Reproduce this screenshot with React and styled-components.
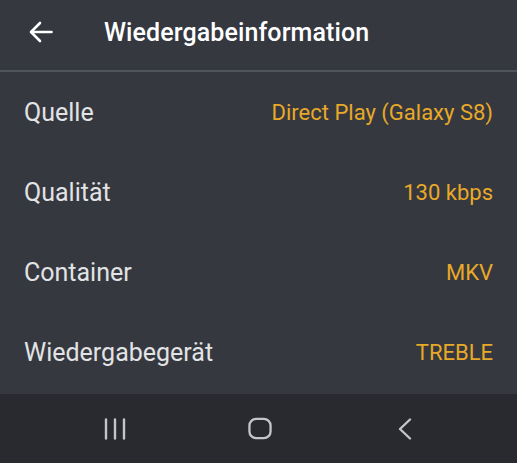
import React from 'react';
import styled, { createGlobalStyle } from 'styled-components';

const GlobalStyle = createGlobalStyle`
  html, body {
    margin: 0;
    padding: 0;
    background: #35383f;
  }
  body {
    font-family: Roboto, "Noto Sans", "Liberation Sans", sans-serif;
    -webkit-font-smoothing: antialiased;
  }
`;

const Screen = styled.div`
  width: 517px;
  height: 463px;
  display: flex;
  flex-direction: column;
  background: #35383f;
  overflow: hidden;
`;

const Toolbar = styled.header`
  height: 72px;
  box-sizing: border-box;
  display: flex;
  align-items: center;
  padding: 0 0 6px 28px;
  border-bottom: 2px solid #50545b;
  flex-shrink: 0;
`;

const BackButton = styled.button`
  width: 26px;
  height: 26px;
  padding: 0;
  border: 0;
  background: none;
  display: flex;
  align-items: center;
  justify-content: center;
  margin-right: 50px;
  color: #ffffff;
`;

const Title = styled.h1`
  margin: 0;
  font-size: 25px;
  font-weight: 500;
  color: #ffffff;
  letter-spacing: 0.1px;
`;

const List = styled.div`
  flex: 1;
  display: flex;
  flex-direction: column;
`;

const Row = styled.div`
  height: 80px;
  display: flex;
  align-items: center;
  justify-content: space-between;
  padding: 0 24px;
`;

const Label = styled.span`
  font-size: 25px;
  color: #e2e3e5;
`;

const Value = styled.span`
  font-size: 22px;
  color: #e8a928;
`;

const NavBar = styled.nav`
  height: 69px;
  flex-shrink: 0;
  background: #282a2f;
  display: flex;
  align-items: center;
  justify-content: center;
  gap: 121px;
  padding-left: 2px;
  color: #c4c5c8;
`;

const NavIcon = styled.div`
  width: 24px;
  height: 24px;
  display: flex;
  align-items: center;
  justify-content: center;
`;

const rows = [
  ['Quelle', 'Direct Play (Galaxy S8)'],
  ['Qualität', '130 kbps'],
  ['Container', 'MKV'],
  ['Wiedergabegerät', 'TREBLE'],
];

export default function App() {
  return (
    <Screen>
      <GlobalStyle />
      <Toolbar>
        <BackButton aria-label="Zurück">
          <svg width="24" height="22" viewBox="0 0 24 22" fill="none" stroke="currentColor" strokeWidth="2.6" strokeLinecap="round" strokeLinejoin="round">
            <path d="M22.5 11H2.5" />
            <path d="M11 2L2 11l9 9" />
          </svg>
        </BackButton>
        <Title>Wiedergabeinformation</Title>
      </Toolbar>
      <List>
        {rows.map(([label, value]) => (
          <Row key={label}>
            <Label>{label}</Label>
            <Value>{value}</Value>
          </Row>
        ))}
      </List>
      <NavBar>
        <NavIcon>
          <svg width="22" height="22" viewBox="0 0 22 22" stroke="currentColor" strokeWidth="2.4" strokeLinecap="round">
            <path d="M2 1.5v19M11 1.5v19M20 1.5v19" />
          </svg>
        </NavIcon>
        <NavIcon>
          <svg width="25" height="23" viewBox="0 0 25 23" fill="none" stroke="currentColor" strokeWidth="2.4">
            <rect x="1.5" y="1.5" width="22" height="20" rx="7" />
          </svg>
        </NavIcon>
        <NavIcon>
          <svg width="16" height="22" viewBox="0 0 16 22" fill="none" stroke="currentColor" strokeWidth="2.4" strokeLinecap="round" strokeLinejoin="round">
            <path d="M13 1.5L3 11l10 9.5" />
          </svg>
        </NavIcon>
      </NavBar>
    </Screen>
  );
}
